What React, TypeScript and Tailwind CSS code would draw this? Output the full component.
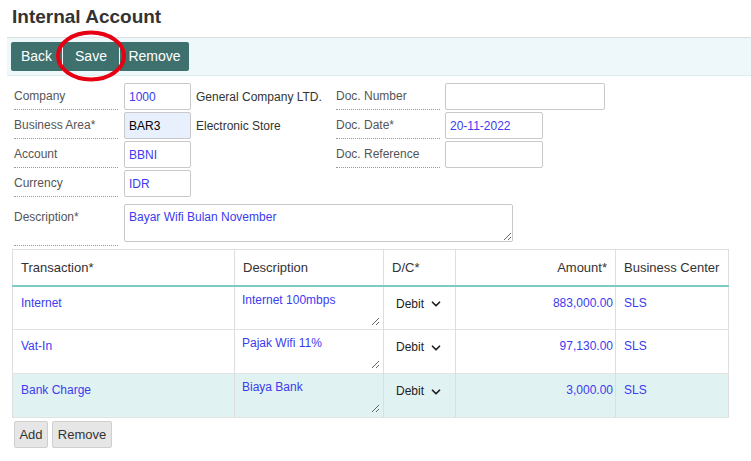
import React from "react";
import { ChevronDown } from "lucide-react";

const BLUE = "text-[#3b3bef]";

function Label({ children, className = "" }: { children: React.ReactNode; className?: string }) {
  return (
    <div
      className={
        "w-[104px] shrink-0 border-b border-dotted border-[#9a9a9a] text-[12px] text-[#555] flex items-center " +
        className
      }
    >
      {children}
    </div>
  );
}

function Box({ value, w, className = "" }: { value?: string; w: string; className?: string }) {
  return (
    <div
      className={
        "h-[27px] border border-[#c9c9c9] rounded-[2px] flex items-center px-[4px] text-[12px] shrink-0 " +
        w +
        " " +
        className
      }
    >
      {value}
    </div>
  );
}

const rows = [
  { t: "Internet", d: "Internet 100mbps", a: "883,000.00", bg: "bg-white" },
  { t: "Vat-In", d: "Pajak Wifi 11%", a: "97,130.00", bg: "bg-white" },
  { t: "Bank Charge", d: "Biaya Bank", a: "3,000.00", bg: "bg-[#e1f2f2]" },
];

export default function App() {
  return (
    <div className="relative w-[751px] h-[461px] bg-white font-['Liberation_Sans',Arial,sans-serif] overflow-hidden">
      <h1 className="pl-[12px] pt-[6px] h-[37px] text-[19px] font-bold text-[#333] leading-[22px]">
        Internal Account
      </h1>

      {/* toolbar */}
      <div className="ml-[7px] h-[39px] border-t border-b border-t-[#dedede] border-b-[#dcefef] bg-[#eef7f9] flex items-center pl-[4px] gap-px">
        <button className="w-[51px] h-[29px] bg-[#3e706d] text-white text-[14px] rounded-l-[2px]">Back</button>
        <button className="w-[56px] h-[29px] bg-[#3e706d] text-white text-[14px]">Save</button>
        <button className="w-[69px] h-[29px] bg-[#3e706d] text-white text-[14px] rounded-r-[2px]">Remove</button>
      </div>

      {/* red annotation ellipse */}
      <svg className="absolute left-[54px] top-[29px]" width="74" height="54" viewBox="0 0 74 54">
        <ellipse cx="37" cy="27" rx="33" ry="23.5" fill="none" stroke="#e60012" strokeWidth="4" />
      </svg>

      {/* form */}
      <div className="pl-[14px] pt-[7px] flex flex-col gap-[2px]">
        <div className="flex h-[27px]">
          <div className="w-[322px] flex">
            <Label>Company</Label>
            <Box value="1000" w="w-[67px]" className={"ml-[6px] " + BLUE} />
            <div className="ml-[5px] text-[12px] text-[#333] flex items-center whitespace-nowrap">General Company LTD.</div>
          </div>
          <Label>Doc. Number</Label>
          <Box w="w-[160px]" className="ml-[5px]" />
        </div>
        <div className="flex h-[27px]">
          <div className="w-[322px] flex">
            <Label>Business Area*</Label>
            <Box value="BAR3" w="w-[67px]" className="ml-[6px] bg-[#e8f0fe] text-black" />
            <div className="ml-[5px] text-[12px] text-[#333] flex items-center">Electronic Store</div>
          </div>
          <Label>Doc. Date*</Label>
          <Box value="20-11-2022" w="w-[98px]" className={"ml-[5px] " + BLUE} />
        </div>
        <div className="flex h-[27px]">
          <div className="w-[322px] flex">
            <Label>Account</Label>
            <Box value="BBNI" w="w-[67px]" className={"ml-[6px] " + BLUE} />
          </div>
          <Label>Doc. Reference</Label>
          <Box w="w-[98px]" className="ml-[5px]" />
        </div>
        <div className="flex h-[27px]">
          <div className="w-[322px] flex">
            <Label>Currency</Label>
            <Box value="IDR" w="w-[67px]" className={"ml-[6px] " + BLUE} />
          </div>
        </div>
        <div className="flex mt-[5px]">
          <Label className="h-[42px] items-start pt-[4px]">Description*</Label>
          <textarea
            className={"ml-[6px] w-[389px] h-[38px] border border-[#c9c9c9] rounded-[2px] px-[4px] py-[3px] text-[12px] outline-none " + BLUE}
            defaultValue="Bayar Wifi Bulan November"
          />
        </div>
      </div>

      {/* table */}
      <table className="ml-[12px] mt-[3px] border-collapse border border-[#dedede] text-[12px] table-fixed w-[716px]">
        <colgroup>
          <col className="w-[222px]" />
          <col className="w-[149px]" />
          <col className="w-[72px]" />
          <col className="w-[160px]" />
          <col className="w-[113px]" />
        </colgroup>
        <thead>
          <tr className="h-[36px] border-b-2 border-b-[#7ecac5] text-[13px] text-[#333]">
            <th className="font-normal text-left px-[8px] border-r border-[#dedede]">Transaction*</th>
            <th className="font-normal text-left px-[8px] border-r border-[#dedede]">Description</th>
            <th className="font-normal text-left px-[8px] border-r border-[#dedede]">D/C*</th>
            <th className="font-normal text-right px-[8px] border-r border-[#dedede]">Amount*</th>
            <th className="font-normal text-left px-[8px] whitespace-nowrap">Business Center</th>
          </tr>
        </thead>
        <tbody>
          {rows.map((r) => (
            <tr key={r.t} className={"h-[44px] border-b border-[#e3e3e3] " + r.bg}>
              <td className={"align-top px-[8px] pt-[7px] border-r border-[#dedede] " + BLUE}>{r.t}</td>
              <td className="align-top p-[3px] border-r border-[#dedede]">
                <textarea
                  className={"block w-full h-[36px] bg-transparent px-[4px] py-[1px] text-[12px] outline-none " + BLUE}
                  defaultValue={r.d}
                />
              </td>
              <td className="align-top px-[12px] pt-[8px] border-r border-[#dedede] text-[#222]">
                <div className="flex items-center gap-[5px]">
                  <span>Debit</span>
                  <ChevronDown size={14} strokeWidth={3} className="mt-[1px]" />
                </div>
              </td>
              <td className={"align-top text-right px-[2px] pt-[7px] border-r border-[#dedede] " + BLUE}>{r.a}</td>
              <td className={"align-top px-[8px] pt-[7px] " + BLUE}>SLS</td>
            </tr>
          ))}
        </tbody>
      </table>

      <div className="ml-[14px] mt-[3px] flex gap-[4px]">
        <button className="w-[34px] h-[27px] bg-[#e6e6e6] border border-[#cfcfcf] rounded-[2px] text-[13px] text-[#333]">Add</button>
        <button className="w-[60px] h-[27px] bg-[#e6e6e6] border border-[#cfcfcf] rounded-[2px] text-[13px] text-[#333]">Remove</button>
      </div>
    </div>
  );
}
